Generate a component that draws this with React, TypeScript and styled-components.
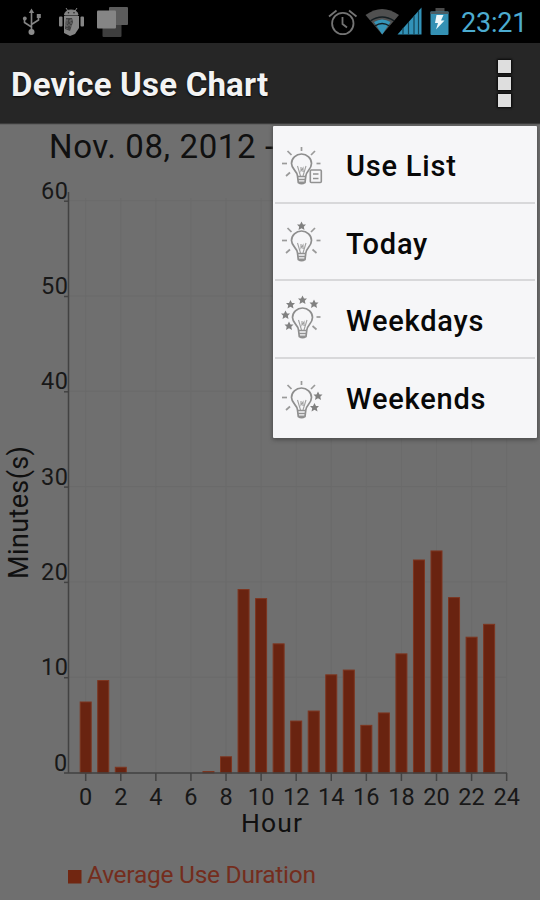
import React from 'react';
import styled, { createGlobalStyle } from 'styled-components';

const GlobalStyle = createGlobalStyle`
  * { box-sizing: border-box; }
  body { margin: 0; background: #6f6f6f; font-family: Roboto, sans-serif; }
`;

const Screen = styled.div`
  position: relative;
  display: flex;
  flex-direction: column;
  width: 540px;
  height: 900px;
  overflow: hidden;
  background: #6f6f6f;
`;

const StatusBar = styled.header`
  display: flex;
  align-items: flex-start;
  justify-content: space-between;
  height: 43px;
  padding-right: 12px;
  background: #000;
`;

const StatusGroup = styled.div`
  display: flex;
  height: 43px;
`;

const Clock = styled.time`
  width: 67px;
  margin-left: 8px;
  font-size: 27px;
  line-height: 46px;
  letter-spacing: -0.2px;
  white-space: nowrap;
  color: #4cacd0;
`;

const ActionBar = styled.div`
  display: flex;
  align-items: center;
  justify-content: space-between;
  height: 81px;
  padding: 0 29px 0 11px;
  background: #262626;
  border-bottom: 1px solid #3b3b3b;
`;

const Title = styled.h1`
  margin: 4px 0 0;
  font-size: 33px;
  font-weight: 700;
  line-height: 40px;
  white-space: nowrap;
  color: #f3f3f3;
  text-shadow: 0 1px 2px #000;
  letter-spacing: 0.2px;
`;

const Overflow = styled.button`
  display: flex;
  flex-direction: column;
  gap: 4px;
  padding: 0;
  border: 0;
  background: none;
`;

const Dot = styled.span`
  width: 13px;
  height: 13px;
  background: #dedede;
  box-shadow: 0 0 2px 1px #080808;
`;

const ChartArea = styled.main`
  height: 776px;
  svg { display: block; }
`;

const Menu = styled.ul`
  position: absolute;
  top: 126px;
  left: 273px;
  width: 264px;
  height: 312px;
  margin: 0;
  padding: 0 2px;
  list-style: none;
  background: #f6f6f8;
  border-radius: 1px;
  box-shadow: 0 0 2px 1px #55555580, 0 2px 4px #3338;
`;

const MenuItem = styled.li`
  display: flex;
  align-items: center;
  height: 77.6px;
  border-bottom: 2px solid #d8d8da;
  &:last-child { border-bottom: 0; }
`;

const MenuLabel = styled.span<{ $w: number }>`
  width: ${(p) => p.$w}px;
  margin: 5px 0 0 17px;
  font-size: 29px;
  font-weight: 500;
  line-height: 36px;
  letter-spacing: 0.8px;
  white-space: nowrap;
  color: #080808;
  ${MenuItem}:last-child & { margin-top: 3px; }
`;

const LeftIcons = () => (
  <svg width="135" height="43" fill="none">
    <g stroke="#858585" strokeWidth="1.6">
      <path d="M31.5 13V31M31.5 27L24.5 22.5V19M31.5 24.5L38.5 20V17" />
    </g>
    <path d="M31.5 8.5L28.8 13H34.2Z" fill="#858585" />
    <circle cx="31.5" cy="32" r="3" fill="#8c8c8c" />
    <circle cx="24.8" cy="18.5" r="1.9" fill="#858585" />
    <rect x="36.8" y="14" width="4" height="4" fill="#858585" />
    <path d="M64.5 15Q65 10 71 10Q77.500 10 78 15ZM66 8L68 11M77 8L75 11" fill="#858585" stroke="#858585" />
    <path d="M64 16H79V28L75 34L70 36L64 33Z" fill="#858585" />
    <rect x="59" y="16.500" width="3.500" height="10" rx="1" fill="#858585" />
    <rect x="80.500" y="16.500" width="3.500" height="10" rx="1" fill="#858585" />
    <path d="M66 18H72L73 22L70 31L65 29Z" fill="#414141" />
    <path d="M67 19V29M71 19V28M66 21H72M65 25H71" stroke="#727272" strokeDasharray="2 1" />
    <circle cx="68.5" cy="12.800" r=".8" fill="#222" />
    <circle cx="74" cy="12.800" r=".8" fill="#222" />
    <rect x="102.500" y="19.500" width="19" height="17.500" rx="1" fill="#3e3e3e" />
    <rect x="109" y="7" width="19" height="18" rx="1" fill="#5c5c5c" />
    <rect x="97" y="10.500" width="19" height="18" rx="1" fill="#858585" />
  </svg>
);

const RightIcons = () => (
  <svg width="125" height="43" fill="none">
    <g transform="translate(-328.500 0)">
      <g stroke="#747474" strokeWidth="1.8">
        <circle cx="343.300" cy="23.500" r="10.700" />
        <path d="M343 17V24L347.500 27.500" />
        <path d="M329.500 16.500L337 10.500M349.500 10.500L357 16.500" />
      </g>
      <path d="M366 15Q382.500 3 399.500 15L382.700 34.500Z" fill="#505050" />
      <path d="M374.500 22Q382.500 17 391 22L382.700 34.500Z" fill="#3595b9" />
      <path d="M371 20.800Q382.500 13 394.500 20.800M375.500 26Q382.500 21 390 26" stroke="#141e22" strokeWidth="1.500" />
      <path d="M398 34.500L422 7.500V34.500Z" fill="#3292b8" />
      <path d="M403.500 28V35M409 22V35M414.500 16V35M419 11V35" stroke="#144455" strokeWidth="1.200" />
      <rect x="436" y="8" width="9" height="4" fill="#4b4b4b" />
      <rect x="431" y="11.500" width="18" height="23.500" rx="1" fill="#3491b4" />
      <rect x="431" y="11.500" width="18" height="2.500" fill="#4c5c62" />
      <path d="M437 15H444L441.500 20.500H445L436.500 29.500L438.500 23H435.500Z" fill="#eef8fa" />
    </g>
  </svg>
);

type Kind = 'list' | 'today' | 'weekdays' | 'weekends';

const STAR = 'M0-4.600L1.500-1.600L4.500-1.400L2.300.8L3 4L0 2.300L-3 4L-2.300.8L-4.500-1.400L-1.500-1.600Z';

const RAYS = ['M26.500 9V13', 'M12.500 13L16.500 17', 'M40 13L36 17', 'M7 25.500H12', 'M41.500 25.500H45.500', 'M15 34.500L11 38', 'M37.500 34.500L41.500 38'];

const MARKS: Record<Kind, { rays: number[]; stars: number[][] }> = {
  list: { rays: [0, 1, 2, 3, 4, 5], stars: [] },
  today: { rays: [1, 2, 3, 4, 5, 6], stars: [[26.5, 11]] },
  weekdays: { rays: [4, 6], stars: [[27.5, 7], [15.5, 11.500], [39, 11], [10.500, 22], [14, 33]] },
  weekends: { rays: [0, 1, 2, 3, 5], stars: [[43, 24], [39.500, 35.500]] },
};

const BulbIcon = ({ kind }: { kind: Kind }) => {
  const shift = kind === 'weekdays' ? -1.5 : 0;
  return (
    <svg width="54" height="54" viewBox="0 -1 54 54" fill="none">
      <g stroke="#9a9a9a" strokeWidth="1.7">
        {MARKS[kind].rays.map((i) => <path key={i} d={RAYS[i]} transform={`translate(0 ${shift})`} />)}
      </g>
      <g transform={kind === 'weekdays' ? 'translate(1 -1)' : undefined}>
        <path d="M22.500 38C22.500 33 16.500 31.500 16.500 25.500A10 9.500 0 0 1 36.500 25.500C36.500 31.500 31 33 30.800 38L30 44.500Q26.500 47 23.300 44.500Z" stroke="#8e8e8e" strokeWidth="1.700" />
        <path d="M22.500 28L25.500 38M31 28L28 38M26 29V33L28 30V34" stroke="#a0a0a0" strokeWidth="1.100" />
        <path d="M22.500 38.500H31M23 41.500H30.500M23.500 44.300H30" stroke="#929292" strokeWidth="1.600" />
      </g>
      {MARKS[kind].stars.map(([x, y]) => <path key={x} d={STAR} fill="#808080" transform={`translate(${x} ${y})`} />)}
      {kind === 'list' && (
        <g stroke="#929292" strokeWidth="1.600">
          <rect x="35.300" y="32" width="11" height="12.500" rx="1" fill="#f6f6f8" />
          <path d="M38 36H43.500M38 40.500H43.500" strokeWidth="1.300" />
        </g>
      )}
    </svg>
  );
};

const ITEMS: { kind: Kind; label: string; w: number }[] = [
  { kind: 'list', label: 'Use List', w: 112 },
  { kind: 'today', label: 'Today', w: 83 },
  { kind: 'weekdays', label: 'Weekdays', w: 140 },
  { kind: 'weekends', label: 'Weekends', w: 141 },
];

const BASE = 772.5;
const UNIT = 9.53;
const hourX = (h: number) => 85.7 + h * 17.54;
const VALUES = [7.45, 9.7, 0.6, 0, 0, 0, 0, 0.15, 1.7, 19.25, 18.3, 13.55, 5.45, 6.5, 10.3, 10.8, 5, 6.3, 12.5, 22.35, 23.3, 18.4, 14.25, 15.6];

const AxisText = styled.text`
  font-size: 23.5px;
  fill: #181818;
`;

const ChartText = styled.text<{ $size: number; $fill?: string }>`
  font-size: ${(p) => p.$size}px;
  fill: ${(p) => p.$fill ?? '#101010'};
`;

const Chart = () => (
  <svg width="540" height="776" viewBox="0 124 540 776">
    <path d="M0 124.500H540" stroke="#626262" />
    <ChartText $size={33} x="49" y="158" textLength="225" lengthAdjust="spacing">Nov. 08, 2012 -</ChartText>
    <g stroke="#6b6b6b">
      {[10, 20, 30, 40, 50, 60].map((v) => <path key={v} d={`M68 ${BASE - v * UNIT}H507`} />)}
      {Array.from({ length: 13 }, (_, i) => <path key={i} d={`M${hourX(i * 2)} 198V${BASE}`} />)}
    </g>
    {VALUES.map((v, h) => v > 0 && (
      <rect key={h} x={hourX(h) - 5.500} y={BASE - v * UNIT + 0.5} width="11" height={v * UNIT} fill="#692310" stroke="#7e351f" strokeWidth="1" />
    ))}
    <g stroke="#424242" strokeWidth="1.500">
      <path d={`M68.500 192V773M64 ${BASE + 0.5}H507`} />
      {[10, 20, 30, 40, 50, 60].map((v) => <path key={v} d={`M64 ${BASE - v * UNIT + 0.5}H69`} />)}
      {Array.from({ length: 13 }, (_, i) => <path key={i} d={`M${hourX(i * 2)} 773V781`} />)}
    </g>
    {[0, 10, 20, 30, 40, 50, 60].map((v) => (
      <AxisText key={v} x={v ? 41 : 54} y={BASE - v * UNIT - 2} textLength={v ? 27 : 13.5}>{v}</AxisText>
    ))}
    {Array.from({ length: 13 }, (_, i) => (
      <AxisText key={i} x={hourX(i * 2)} y="805" textAnchor="middle" textLength={i > 4 ? 26.500 : 13}>{i * 2}</AxisText>
    ))}
    <ChartText $size={26.5} x="241" y="832" textLength="61">Hour</ChartText>
    <ChartText $size={27} transform="translate(27.500 579) rotate(-90)" textLength="133">Minutes(s)</ChartText>
    <rect x="68" y="870" width="13.500" height="13.500" fill="#712611" />
    <ChartText $size={24.5} $fill="#742d1d" x="87" y="883" textLength="229">Average Use Duration</ChartText>
  </svg>
);

export default function App() {
  return (
    <>
      <GlobalStyle />
      <Screen>
        <StatusBar>
          <StatusGroup><LeftIcons /></StatusGroup>
          <StatusGroup><RightIcons /><Clock>23:21</Clock></StatusGroup>
        </StatusBar>
        <ActionBar>
          <Title>Device Use Chart</Title>
          <Overflow aria-label="More options"><Dot /><Dot /><Dot /></Overflow>
        </ActionBar>
        <ChartArea><Chart /></ChartArea>
        <Menu>
          {ITEMS.map((item) => (
            <MenuItem key={item.label}>
              <BulbIcon kind={item.kind} />
              <MenuLabel $w={item.w}>{item.label}</MenuLabel>
            </MenuItem>
          ))}
        </Menu>
      </Screen>
    </>
  );
}
